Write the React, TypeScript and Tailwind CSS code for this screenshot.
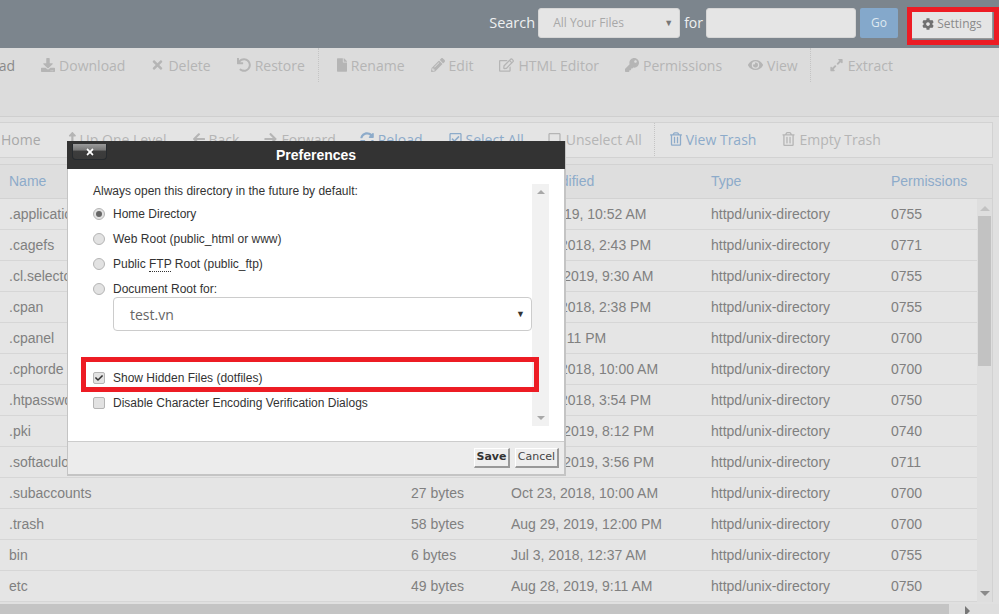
import {
  FaArrowLeft,
  FaArrowRight,
  FaCheck,
  FaCog,
  FaDownload,
  FaExpandAlt,
  FaEye,
  FaFile,
  FaHome,
  FaKey,
  FaLevelUpAlt,
  FaPencilAlt,
  FaRegCheckSquare,
  FaRegEdit,
  FaRegSquare,
  FaRegTrashAlt,
  FaSyncAlt,
  FaTimes,
  FaUndo,
  FaUpload,
} from "react-icons/fa";
import type { IconType } from "react-icons";

const rows = [
  [".application", "4 KB", "Jul 3, 2019, 10:52 AM", "0755"],
  [".cagefs", "24 bytes", "Oct 23, 2018, 2:43 PM", "0771"],
  [".cl.selector", "30 bytes", "Aug 29, 2019, 9:30 AM", "0755"],
  [".cpan", "29 bytes", "Oct 23, 2018, 2:38 PM", "0755"],
  [".cpanel", "4 KB", "Today, 2:11 PM", "0700"],
  [".cphorde", "70 bytes", "Oct 23, 2018, 10:00 AM", "0700"],
  [".htpasswds", "6 bytes", "Oct 23, 2018, 3:54 PM", "0750"],
  [".pki", "21 bytes", "Aug 28, 2019, 8:12 PM", "0740"],
  [".softaculous", "4 KB", "Aug 29, 2019, 3:56 PM", "0711"],
  [".subaccounts", "27 bytes", "Oct 23, 2018, 10:00 AM", "0700"],
  [".trash", "58 bytes", "Aug 29, 2019, 12:00 PM", "0700"],
  ["bin", "6 bytes", "Jul 3, 2018, 12:37 AM", "0755"],
  ["etc", "49 bytes", "Aug 28, 2019, 9:11 AM", "0750"],
];

function Tool({
  icon: Icon,
  label,
  blue,
  size = "w-[14px]",
  className = "",
}: {
  icon: IconType;
  label: string;
  blue?: boolean;
  size?: string;
  className?: string;
}) {
  return (
    <span className={`flex items-center gap-[4px] whitespace-nowrap ${blue ? "text-[#8dabca]" : "text-[#b5b5b5]"} ${className}`}>
      <Icon className={`h-[14px] shrink-0 ${size}`} />
      {label}
    </span>
  );
}

function Radio({ label, checked }: { label: React.ReactNode; checked?: boolean }) {
  return (
    <div className="flex h-[25px] items-center">
      <span className="flex h-[12px] w-[12px] items-center justify-center rounded-full border border-[#b5b5b5] bg-[#e2e2e2]">
        {checked && <span className="h-[6px] w-[6px] rounded-full bg-[#666]" />}
      </span>
      <span className="ml-[8px]">{label}</span>
    </div>
  );
}

function Check({ label, checked }: { label: string; checked?: boolean }) {
  return (
    <div className="flex h-[25px] items-center">
      <span className="flex h-[12px] w-[12px] items-center justify-center rounded-[2px] border border-[#b5b5b5] bg-[#e2e2e2]">
        {checked && <FaCheck className="h-[8px] w-[8px] text-[#333]" />}
      </span>
      <span className="ml-[8px]">{label}</span>
    </div>
  );
}

export default function App() {
  return (
    <div className="relative h-[614px] w-[999px] overflow-hidden bg-[#e0e0e0] font-['Open_Sans',sans-serif]">
      {/* top bar */}
      <div className="flex h-[48px] items-center justify-end bg-[#7c858d] pr-[6px] pb-[3px] text-[#eef0f1]">
        <span className="mr-[3px] text-[14.5px]">Search</span>
        <div className="flex h-[30px] w-[142px] items-center justify-between rounded-[3px] border border-[#d6d6d6] bg-[#e5e5e5] pr-[6px] pl-[14px] text-[12px] text-[#a8a8a8]">
          All Your Files
          <span className="text-[9px] text-[#777]">▼</span>
        </div>
        <span className="mr-[3px] ml-[4px] text-[14px]">for</span>
        <div className="h-[30px] w-[150px] rounded-[3px] border border-[#d6d6d6] bg-[#e5e5e5]" />
        <div className="ml-[4px] flex h-[30px] w-[38px] items-center justify-center rounded-[2px] bg-[#84a8cb] text-[12px] text-[#dfe8f0]">
          Go
        </div>
        <div className="mt-[3px] ml-[14px] flex h-[29px] w-[81px] items-center justify-center gap-[3px] border-r border-b border-[#999] bg-[#e5e5e5] text-[12px] text-[#8a8a8a]">
          <FaCog className="h-[12px] w-[12px] text-[#707070]" />
          Settings
        </div>
      </div>

      {/* main actions */}
      <div className="h-[69px] overflow-hidden border-b border-[#cfcfcf] bg-[#dcdcdc] text-[14px]">
        <div className="-ml-[50px] flex h-[34px] items-center gap-[26px]">
          <span className="flex items-center gap-[4px] text-[#8a8a8a]">
            <FaUpload className="h-[14px] w-[14px]" />
            Upload
          </span>
          <Tool icon={FaDownload} label="Download" />
          <Tool icon={FaTimes} label="Delete" size="w-[13px]" />
          <Tool icon={FaUndo} label="Restore" />
          <span className="-mr-[8px] -ml-[13px] h-[34px] border-l border-dotted border-[#c4c4c4]" />
          <Tool icon={FaFile} label="Rename" size="w-[10px]" />
          <Tool icon={FaPencilAlt} label="Edit" />
          <Tool icon={FaRegEdit} label="HTML Editor" size="w-[15px]" />
          <Tool icon={FaKey} label="Permissions" />
          <Tool icon={FaEye} label="View" size="w-[15px]" />
          <span className="-mr-[8px] -ml-[14px] h-[34px] border-l border-dotted border-[#c4c4c4]" />
          <Tool icon={FaExpandAlt} label="Extract" size="w-[15px]" />
        </div>
      </div>

      {/* secondary actions */}
      <div className="mt-[5px] mr-[6px] -ml-[2px] flex h-[36px] items-center gap-[26px] overflow-hidden border border-[#d2d2d2] bg-[#e4e4e4] pb-[2px] text-[14px]">
        <span className="-ml-[16px] flex items-center gap-[4px] text-[#a8a8a8]">
          <FaHome className="h-[14px] w-[14px]" />
          Home
        </span>
        <Tool icon={FaLevelUpAlt} label="Up One Level" size="w-[9px]" />
        <Tool icon={FaArrowLeft} label="Back" size="w-[12px]" />
        <Tool icon={FaArrowRight} label="Forward" size="w-[13px]" className="-ml-[1px]" />
        <Tool icon={FaSyncAlt} label="Reload" blue className="-ml-[2px]" />
        <Tool icon={FaRegCheckSquare} label="Select All" blue size="w-[13px]" />
        <Tool icon={FaRegSquare} label="Unselect All" size="w-[15px]" className="-ml-[3px]" />
        <span className="-mr-[11px] -ml-[14px] h-[34px] border-l border-dotted border-[#c4c4c4]" />
        <Tool icon={FaRegTrashAlt} label="View Trash" blue size="w-[12px]" />
        <Tool icon={FaRegTrashAlt} label="Empty Trash" size="w-[13px]" />
      </div>

      {/* file table */}
      <div className="mt-[6px] mr-[6px] -ml-[1px] border-t border-r border-l border-[#d2d2d2] font-['Liberation_Sans',sans-serif] text-[14px]">
        <div className="grid h-[34px] grid-cols-[402px_100px_200px_180px_1fr] items-center border-b border-[#d2d2d2] bg-[#dedede] pl-[9px] text-[#8dabca]">
          <span>Name</span>
          <span>Size</span>
          <span>Last Modified</span>
          <span>Type</span>
          <span>Permissions</span>
        </div>
        <div className="flex">
          <div className="w-[977px] shrink-0">
            {rows.map((r) => (
              <div
                key={r[0]}
                className="grid h-[31px] grid-cols-[402px_100px_200px_180px_1fr] items-center border-b border-[#d6d6d6] bg-[#e5e5e5] pl-[9px] text-[#808080]"
              >
                <span>{r[0]}</span>
                <span>{r[1]}</span>
                <span>{r[2]}</span>
                <span>httpd/unix-directory</span>
                <span>{r[3]}</span>
              </div>
            ))}
          </div>
          <div className="flex flex-1 flex-col items-center bg-[#dedede] pt-[7px] pb-[6px]">
            <span className="h-0 w-0 border-x-[5px] border-b-[5px] border-x-transparent border-b-[#c2c2c2]" />
            <div className="mt-[5px] h-[150px] w-[13px] bg-[#c2c2c2]" />
            <span className="mt-auto h-0 w-0 border-x-[5px] border-t-[5px] border-x-transparent border-t-[#8a8a8a]" />
          </div>
        </div>
      </div>

      {/* horizontal scrollbar */}
      <div className="absolute right-0 bottom-0 left-0 flex h-[10px] bg-[#dedede]">
        <div className="h-full w-[949px] bg-[#c4c4c4]" />
        <span className="mt-[2px] ml-[16px] h-0 w-0 border-y-[5px] border-l-[5px] border-y-transparent border-l-[#777]" />
      </div>

      {/* preferences dialog */}
      <div className="absolute top-[141px] left-[67px] flex h-[335px] w-[499px] flex-col border-r-[2px] border-b-[2px] border-l border-[#c4c4c4] font-['Liberation_Sans',sans-serif] text-[12px] text-[#333]">
        <div className="relative -mx-px flex h-[28px] shrink-0 items-center justify-center bg-[#333] text-[14px] font-bold text-white">
          Preferences
          <div className="absolute top-[3px] left-[5px] flex h-[16px] w-[35px] items-center justify-center rounded-b-[4px] border-x border-b border-[#262a2e] bg-[linear-gradient(#9a9a9a_0%,#777_40%,#3d3d3d_48%,#3a3a3a_100%)]">
            <FaTimes className="h-[10px] w-[10px] text-white" />
          </div>
        </div>
        <div className="relative flex flex-1 bg-white pt-[15px] pl-[25px]">
          <div className="w-[440px]">
            <div className="mb-[3px] flex h-[14px] items-center">Always open this directory in the future by default:</div>
            <Radio label="Home Directory" checked />
            <Radio label="Web Root (public_html or www)" />
            <Radio
              label={
                <>
                  Public <span className="border-b border-dotted border-[#333]">FTP</span> Root (public_ftp)
                </>
              }
            />
            <Radio label="Document Root for:" />
            <div className="-mt-[4px] ml-[20px] flex h-[34px] w-[419px] items-center justify-between rounded-[4px] border border-[#ccc] pr-[6px] pl-[16px] font-['Open_Sans',sans-serif] text-[14px] text-[#666]">
              test.vn
              <span className="text-[9px] text-[#333]">▼</span>
            </div>
            <div className="mt-[34px]">
              <Check label="Show Hidden Files (dotfiles)" checked />
              <Check label="Disable Character Encoding Verification Dialogs" />
            </div>
          </div>
          <div className="absolute top-[15px] right-[15px] bottom-[15px] flex w-[17px] flex-col items-center justify-between bg-[#f1f1f1] py-[6px]">
            <span className="h-0 w-0 border-x-[4px] border-b-[4px] border-x-transparent border-b-[#a8a8a8]" />
            <span className="h-0 w-0 border-x-[4px] border-t-[4px] border-x-transparent border-t-[#a8a8a8]" />
          </div>
        </div>
        <div className="flex h-[33px] shrink-0 items-center justify-end gap-[5px] border-t border-[#ccc] bg-[#ececec] pr-[5px] font-['DejaVu_Sans',sans-serif] text-[11px]">
          <div className="flex h-[20px] w-[36px] items-center justify-center border-t border-r-[2px] border-b-[2px] border-l border-t-white border-r-[#999] border-b-[#999] border-l-white bg-[#eee] font-bold">
            Save
          </div>
          <div className="flex h-[20px] w-[44px] items-center justify-center border-t border-r-[2px] border-b-[2px] border-l border-t-white border-r-[#999] border-b-[#999] border-l-white bg-[#eee] text-[#444]">
            Cancel
          </div>
        </div>
      </div>

      {/* red highlights */}
      <div className="absolute top-[7px] left-[907px] h-[38px] w-[92px] border-[5px] border-[#ed1c24]" />
      <div className="absolute top-[357px] left-[81px] h-[35px] w-[458px] border-[5px] border-[#ed1c24]" />
    </div>
  );
}
